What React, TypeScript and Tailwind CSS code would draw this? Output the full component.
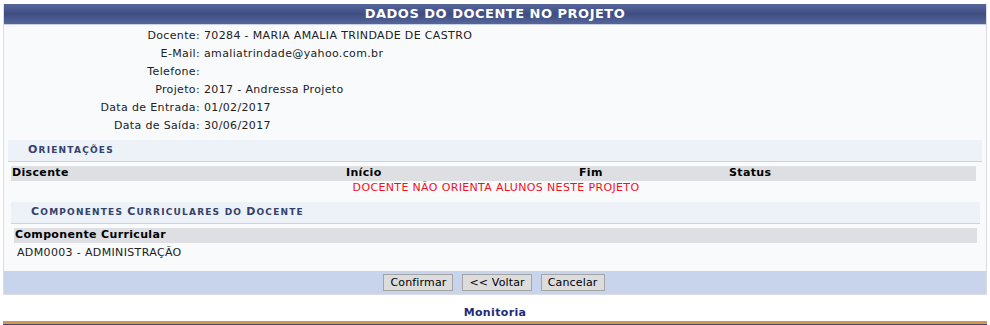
export default function App() {
    const rows: [string, string][] = [
        ["Docente:", "70284 - MARIA AMALIA TRINDADE DE CASTRO"],
        ["E-Mail:", "amaliatrindade@yahoo.com.br"],
        ["Telefone:", ""],
        ["Projeto:", "2017 - Andressa Projeto"],
        ["Data de Entrada:", "01/02/2017"],
        ["Data de Saída:", "30/06/2017"],
    ]

    return <div className="w-[990px] h-[325px] bg-white text-[11px] tracking-[0.35px] text-[#222] overflow-hidden" style={{ fontFamily: "'DejaVu Sans', Verdana, sans-serif" }}>
        <div className="pt-[4px] pl-[3px] pr-[3px]">
            {/* main table */}
            <div className="border-l border-r border-b border-[#dcdde2] bg-[#f8fafc]">
                <div className="h-[21px] bg-gradient-to-b from-[#56669a] via-[#3f4d82] to-[#56669a] text-white font-bold text-[13px] tracking-[0.5px] flex items-center justify-center border-b border-[#c8d0e4]">
                    DADOS DO DOCENTE NO PROJETO
                </div>
                <div className="pt-[2px]">
                    {rows.map(([k, v]) => <div key={k} className="flex h-[18px] items-center">
                        <div className="w-[196px] text-right">{k}</div>
                        <div className="pl-[4px]">{v}</div>
                    </div>)}
                </div>

                {/* orientações */}
                <div className="px-[4px] mt-[5px]">
                    <div className="h-[22px] bg-[#edf1f8] border-b border-[#c6d3ea] flex items-center pl-[20px] font-bold text-[#34426a] tracking-[1.2px] text-[9px]">
                        <span className="text-[11px]">O</span>RIENTAÇÕES
                    </div>
                    <div className="mt-[4px] ml-[3px] mr-[6px] h-[15px] bg-[#dedfe3] font-bold text-black flex items-center">
                        <div className="w-[335px] pl-[1px]">Discente</div>
                        <div className="w-[233px]">Início</div>
                        <div className="w-[150px]">Fim</div>
                        <div>Status</div>
                    </div>
                    <div className="h-[14px] flex items-center justify-center text-[#f4101e]">
                        <span className="ml-[2px]">DOCENTE NÃO ORIENTA ALUNOS NESTE PROJETO</span>
                    </div>
                </div>

                {/* componentes */}
                <div className="pl-[7px] pr-[6px] mt-[7px]">
                    <div className="h-[22px] bg-[#edf1f8] border-b border-[#c6d3ea] flex items-center pl-[20px] font-bold text-[#34426a] tracking-[1.2px] text-[9px]">
                        <span className="text-[11px]">C</span>OMPONENTES <span className="text-[11px] ml-[4px]">C</span>URRICULARES DO <span className="text-[11px] ml-[4px]">D</span>OCENTE
                    </div>
                    <div className="mt-[4px] ml-[3px] mr-[3px] h-[15px] bg-[#dedfe3] font-bold text-black flex items-center pl-[1px]">
                        Componente Curricular
                    </div>
                    <div className="h-[20px] flex items-center pl-[6px] pt-[1px]">ADM0003 - ADMINISTRAÇÃO</div>
                </div>

                <div className="mt-[8px] h-[23px] bg-[#c8d4ec] flex items-center justify-center gap-[9px] pr-[2px] tracking-[0.15px]">
                    <button className="h-[17px] px-[6px] bg-[#dcdcdc] border border-[#a5a5a5] text-[11px] text-black leading-none">Confirmar</button>
                    <button className="h-[17px] px-[6px] bg-[#dcdcdc] border border-[#a5a5a5] text-[11px] text-black leading-none">&lt;&lt; Voltar</button>
                    <button className="h-[17px] px-[6px] bg-[#dcdcdc] border border-[#a5a5a5] text-[11px] text-black leading-none">Cancelar</button>
                </div>
            </div>
        </div>

        <div className="h-[26px] flex items-end justify-center font-bold text-[#1e2b7a]">Monitoria</div>
        <div className="mx-[3px] h-[3px] bg-[#d6974a]"></div>
        <div className="mx-[3px] h-[2px] bg-[#3a4a7c]"></div>
    </div>
}
